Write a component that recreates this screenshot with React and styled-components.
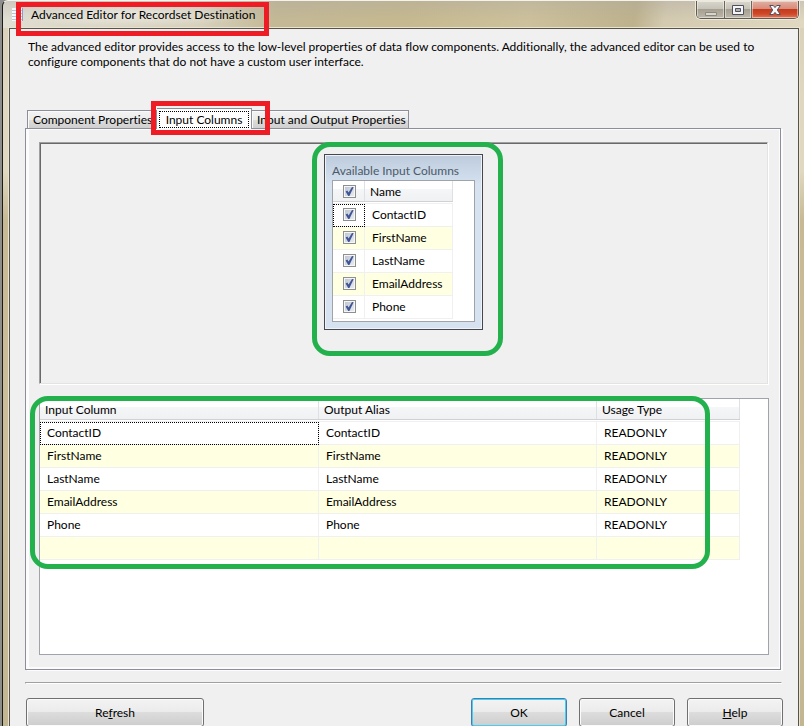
import React, { useState } from "react";
import styled, { createGlobalStyle, css } from "styled-components";

const GlobalStyle = createGlobalStyle`
  *, *::before, *::after { box-sizing: border-box; }
  html, body, #root { height: 100%; }
  body {
    margin: 0;
    overflow: hidden;
    background: #8d8d8b;
    color: #000;
    font-family: Lato, "Open Sans", sans-serif;
    font-size: 12px;
    line-height: 15px;
    font-variant-ligatures: none;
  }
  button, input { font: inherit; color: inherit; margin: 0; }
`;

const Window = styled.div`
  display: flex;
  flex-direction: column;
  height: 100%;
  margin-left: 2px;
  padding: 0 5px 0 6px;
  border-left: 1px solid #1c1a16;
  border-top: 1px solid #f4f2ec;
  border-top-left-radius: 6px;
  background:
    linear-gradient(rgba(170, 165, 160, 0.35), rgba(170, 165, 160, 0) 20px) 0 0 / 100% 27px no-repeat,
    linear-gradient(100deg, #e2dfd4 0, #dcd8c9 60px, #d6d0bc 200px, #c4b995 270px, #c6b98f 400px, #cdc19b 520px, #beb28c 625px, #d3cab0 655px, #e0d8c0 100%) 0 0 / 100% 27px no-repeat,
    linear-gradient(#d8d0b8 0, #dfd7bf 100px, #e0d8c0 170px, #c6b994 220px, #cdbf9b 480px, #c2b692 100%);
`;

const TitleBar = styled.header`
  display: flex;
  flex: none;
  justify-content: space-between;
  align-items: flex-start;
  height: 27px;
`;

const Caption = styled.div`
  position: relative;
  display: flex;
  align-items: center;
  gap: 8px;
  height: 26px;
  padding-left: 3px;
  background: radial-gradient(closest-side, rgba(255, 255, 255, 0.5), rgba(255, 255, 255, 0));
`;

const Title = styled.h1`
  margin: 0;
  font-size: 12px;
  font-weight: 400;
  white-space: nowrap;
`;

const Mark = styled.span`
  position: absolute;
  z-index: 2;
  pointer-events: none;
  border: 5px solid ${(p) => (p.$tone === "red" ? "#ee1c24" : "#22b14c")};
  border-radius: ${(p) => (p.$tone === "red" ? "0" : "18px")};
  inset: ${(p) => p.$inset};
`;

const Controls = styled.div`
  display: flex;
  height: 18px;
  border: 1px solid #5f5b52;
  border-top: 0;
  border-radius: 0 0 5px 5px;
  overflow: hidden;
  box-shadow: 0 0 0 1px #eee9da;
`;

const ControlButton = styled.button`
  display: grid;
  place-items: center;
  width: ${(p) => (p.$close ? "47px" : "27px")};
  padding: 0;
  border: 0;
  border-left: ${(p) => (p.$first ? "0" : "1px solid #6a665c")};
  box-shadow: inset 0 0 0 1px rgba(255, 255, 255, 0.45);
  background: ${(p) =>
    p.$close
      ? "linear-gradient(#e0b0a4 0, #d98a76 8px, #c23a1c 8px, #d0482a 13px, #dc7a5a 100%)"
      : "linear-gradient(#d9d6cd 0, #c6c2b7 8px, #a39e90 8px, #bcb7a8 100%)"};
`;

const Client = styled.main`
  flex: 1;
  display: flex;
  flex-direction: column;
  min-height: 0;
  padding: 10px 17px 0 15px;
  border: 1px solid #57524a;
  border-bottom: 0;
  background: #f0f0f0;
  box-shadow: 0 0 0 1px #e9e3d0;
`;

const Intro = styled.p`
  margin: 0 0 39px;
  padding: 0 8px 0 3px;
`;

const TabList = styled.div`
  display: flex;
  align-items: flex-end;
  height: 20px;
  padding-left: 2px;
`;

const Tab = styled.button`
  position: relative;
  height: 18px;
  padding: 0 2px 0 5px;
  border: 1px solid #8c8e99;
  border-bottom: 0;
  background: linear-gradient(#f3f3f3 0, #ebebeb 9px, #dddddd 9px, #cfcfcf 100%);
  box-shadow: inset 1px 1px 0 #fafafa;
  line-height: 17px;
  white-space: nowrap;
  flex: 0 0 ${(p) => p.$width};
  text-align: left;
  & + & { border-left: 0; }
  ${(p) =>
    p.$active &&
    css`
      z-index: 1;
      height: 21px;
      margin-bottom: -1px;
      padding: 2px;
      background: #fff;
      && { border-left: 1px solid #8c8e99; }
      line-height: 15px;
      text-align: center;
    `}
`;

const FocusText = styled.span`
  display: block;
  border: 1px dotted #000;
`;

const TabPanel = styled.section`
  display: flex;
  flex-direction: column;
  padding: 10px 12px 14px 10px;
  border: 1px solid #8c8e99;
  background: #f0f0f0;
  box-shadow: inset 3px 1px 0 #fcfcfc, inset -1px -2px 0 #fcfcfc, 2px 1px 0 #fcfcfc;
`;

const Canvas = styled.div`
  display: flex;
  justify-content: center;
  align-items: flex-start;
  height: 242px;
  margin: 3px 0 0 3px;
  padding-top: 10px;
  border: 1px solid;
  border-color: #a0a0a0 #e3e3e3 #e3e3e3 #a0a0a0;
  box-shadow: 1px 1px 0 #fff, inset 1px 1px 0 #69696b;
`;

const Inset = styled.div`
  display: flex;
  flex-direction: column;
  gap: 14px;
`;

const ColumnsWindow = styled.section`
  position: relative;
  width: 159px;
  margin-top: 1px;
  padding: 8px 7px 7px;
  border: 1px solid #46474c;
  background: linear-gradient(#bccbdc 0, #d6e2f0 30px, #d6e2f0 100%);
  box-shadow: inset 0 0 0 1px #eef3f9;
`;

const ColumnsTitle = styled.h2`
  margin: 0 0 2px;
  font-size: 12px;
  font-weight: 400;
  color: #4c5a68;
  white-space: nowrap;
`;

const ColumnsBox = styled.div`
  height: 142px;
  border: 1px solid #a0a3aa;
  background: #fff;
`;

const Grid = styled.table`
  width: ${(p) => p.$width};
  table-layout: fixed;
  border-collapse: separate;
  border-spacing: 0;
`;

const HeadCell = styled.th`
  height: 23px;
  padding: 0 0 2px 5px;
  font-weight: 400;
  text-align: left;
  background:
    linear-gradient(#dfe0e3, #dfe0e3) 100% 0 / 1px 20px no-repeat,
    linear-gradient(#fff 0, #fff 8px, #f5f6f8 8px, #f0f1f3 20px, #d0d1d4 20px, #d0d1d4 21px, #fff 21px, #fff 22px, #f0f0f0 22px);
`;

const Cell = styled.td`
  height: 23px;
  padding: 0 0 1px 7px;
  border-right: 1px solid #f0f0f0;
  border-bottom: 1px solid #f0f0f0;
  background: ${(p) => (p.$alt ? "#ffffe1" : "#fff")};
  outline: ${(p) => (p.$focus ? "1px dotted #000" : "none")};
  outline-offset: -1px;
  white-space: nowrap;
`;

const CheckWrap = styled.span`
  display: grid;
  width: 13px;
  height: 13px;
  margin-left: ${(p) => (p.$head ? "5px" : "3px")};
  & > * { grid-area: 1 / 1; }
  & > svg { pointer-events: none; }
`;

const CheckInput = styled.input`
  appearance: none;
  width: 13px;
  height: 13px;
  border: 1px solid #8e8f8f;
  background: linear-gradient(135deg, #bcc3d0, #eceef2);
  box-shadow: inset 0 0 0 1px #f6f6f6;
`;

const ListBox = styled.div`
  position: relative;
  height: 257px;
  margin-left: 3px;
  margin-right: -1px;
  border: 1px solid #a0a3aa;
  background: #fff;
`;

const Separator = styled.hr`
  align-self: stretch;
  height: 3px;
  margin: 12px -1px 13px 0;
  border: 1px solid;
  border-color: #a0a0a0 #fff #fff #a0a0a0;
`;

const Footer = styled.footer`
  display: flex;
  gap: 12px;
  padding: 1px 0 0 1px;
  margin-right: -2px;
`;

const PushButton = styled.button`
  flex: none;
  width: ${(p) => (p.$wide ? "178px" : "96px")};
  height: 29px;
  padding: 0;
  margin-right: ${(p) => (p.$wide ? "auto" : "0")};
  border: 1px solid ${(p) => (p.$primary ? "#3c7fb1" : "#707070")};
  border-radius: 3px;
  background: linear-gradient(#f3f3f3 0, #ebebeb 13px, #dddddd 13px, #cdcdcd 100%);
  box-shadow: ${(p) => (p.$primary ? "inset 0 0 0 1px #48cdf0" : "inset 0 0 0 1px #fbfbfb")};
`;

const names = ["ContactID", "FirstName", "LastName", "EmailAddress", "Phone"];

function Check({ label, head }) {
  const [on, setOn] = useState(true);
  return (
    <CheckWrap $head={head}>
      <CheckInput type="checkbox" aria-label={label} checked={on} onChange={() => setOn(!on)} />
      {on && (
        <svg width="13" height="13" viewBox="0 0 13 13" aria-hidden="true">
          <path d="M2.600 6.600 4.400 5.600 5.600 7.600 9 2 10.600 2.200 6.400 11 5.200 11Z" fill="#3f5596" />
        </svg>
      )}
    </CheckWrap>
  );
}

function ColumnRow({ name, index }) {
  const alt = index % 2 === 1;
  return (
    <tr>
      <Cell $alt={alt} $focus={index === 0}><Check label={name} /></Cell>
      <Cell $alt={alt}>{name}</Cell>
    </tr>
  );
}

function AvailableColumns() {
  return (
    <ColumnsWindow>
      <ColumnsTitle>Available Input Columns</ColumnsTitle>
      <ColumnsBox>
        <Grid $width="120px">
          <colgroup>
            <col width="32" />
            <col />
          </colgroup>
          <thead>
            <tr>
              <HeadCell><Check head label="Select all" /></HeadCell>
              <HeadCell>Name</HeadCell>
            </tr>
          </thead>
          <tbody>
            {names.map((n, i) => (
              <ColumnRow key={n} name={n} index={i} />
            ))}
          </tbody>
        </Grid>
      </ColumnsBox>
      <Mark $tone="green" $inset="-13px -21px -27px -13px" />
    </ColumnsWindow>
  );
}

function SelectedColumns() {
  return (
    <ListBox>
      <Grid $width="calc(100% - 28px)">
        <colgroup>
          <col width="279" />
          <col width="278" />
          <col />
        </colgroup>
        <thead>
          <tr>
            <HeadCell>Input Column</HeadCell>
            <HeadCell>Output Alias</HeadCell>
            <HeadCell>Usage Type</HeadCell>
          </tr>
        </thead>
        <tbody>
          {[...names, ""].map((n, i) => (
            <tr key={n}>
              <Cell $alt={i % 2 === 1} $focus={i === 0}>{n}</Cell>
              <Cell $alt={i % 2 === 1}>{n}</Cell>
              <Cell $alt={i % 2 === 1}>{n && "READONLY"}</Cell>
            </tr>
          ))}
        </tbody>
      </Grid>
      <Mark $tone="green" $inset="-3px 58px 85px -10px" />
    </ListBox>
  );
}

export default function App() {
  return (
    <>
      <GlobalStyle />
      <Window>
        <TitleBar>
          <Caption>
            <svg width="11" height="13" viewBox="0 0 11 13" aria-hidden="true">
              <path fill="#f7f8fa" d="M0 0h11v13H0z" />
              <path stroke="#b9c3d8" d="M0 2.5h11M0 5.5h11M0 8.5h11M0 11.5h11" />
              <path stroke="#8d9cc4" d="M10.5 0v13" />
            </svg>
            <Title>Advanced Editor for Recordset Destination</Title>
            <Mark $tone="red" $inset="1px -14px -9px 7px" />
          </Caption>
          <Controls>
            <ControlButton $first aria-label="Minimize">
              <svg width="12" height="14" viewBox="0 0 12 14">
                <path fill="#d8d5cc" stroke="#8c887d" d="M.5 9.5h11v3H.5z" />
              </svg>
            </ControlButton>
            <ControlButton aria-label="Maximize">
              <svg width="12" height="10" viewBox="0 0 12 10">
                <path fill="#f5f5f5" stroke="#4c5060" d="M.5.5h11v9H.5z" />
                <path fill="#b5b1a5" stroke="#4c5060" d="M3.5 3.5h5v3h-5z" />
              </svg>
            </ControlButton>
            <ControlButton $close aria-label="Close">
              <svg width="12" height="10" viewBox="0 0 12 10">
                <path
                  fill="#f7f7f7"
                  stroke="#4c5060"
                  d="M.7.5h3.600L6 2.600 7.700.5h3.600L8.300 5l3 4.500H7.700L6 7.400 4.300 9.500H.7l3-4.500z"
                />
              </svg>
            </ControlButton>
          </Controls>
        </TitleBar>
        <Client>
          <Intro>
            The advanced editor provides access to the low-level properties of data flow components. Additionally, the
            advanced editor can be used to configure components that do not have a custom user interface.
          </Intro>
          <TabList role="tablist">
            <Tab role="tab" $width="130px">Component Properties</Tab>
            <Tab role="tab" aria-selected="true" $active $width="95px">
              <FocusText>Input Columns</FocusText>
              <Mark $tone="red" $inset="-8px -19px -6px -6px" />
            </Tab>
            <Tab role="tab" $width="156px">Input and Output Properties</Tab>
          </TabList>
          <TabPanel role="tabpanel">
            <Inset>
              <Canvas>
                <AvailableColumns />
              </Canvas>
              <SelectedColumns />
            </Inset>
          </TabPanel>
          <Separator />
          <Footer>
            <PushButton $wide>Re<u>f</u>resh</PushButton>
            <PushButton $primary>OK</PushButton>
            <PushButton>Cancel</PushButton>
            <PushButton><u>H</u>elp</PushButton>
          </Footer>
        </Client>
      </Window>
    </>
  );
}
